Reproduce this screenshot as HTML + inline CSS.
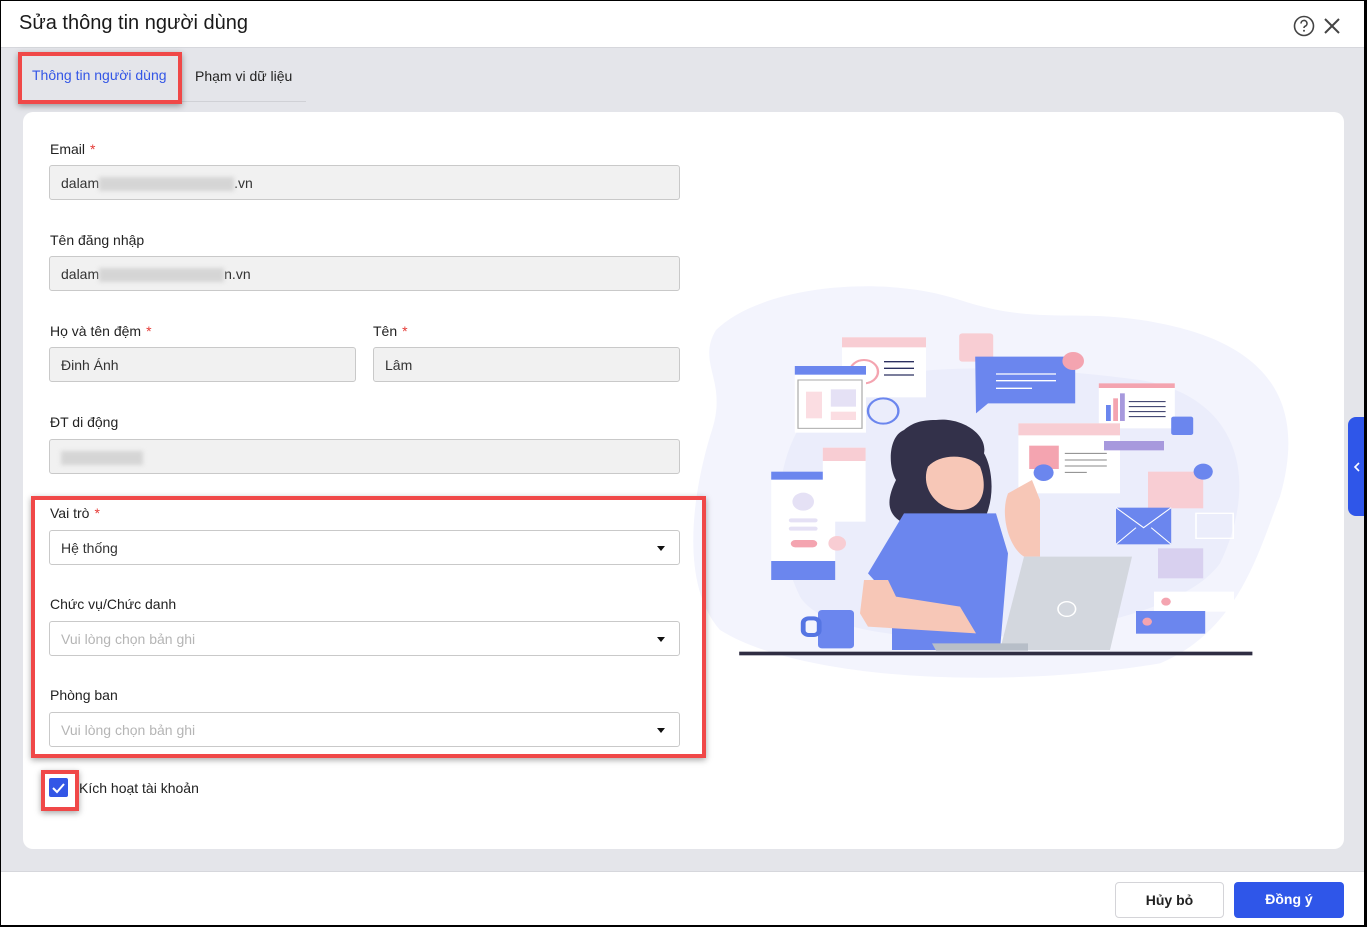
<!DOCTYPE html>
<html><head><meta charset="utf-8"><style>
*{box-sizing:border-box;margin:0;padding:0}
body{width:1367px;height:927px;overflow:hidden;background:#000;font-family:"Liberation Sans",Roboto,sans-serif;position:relative}
.win{position:absolute;left:1px;top:1px;width:1363px;height:924px;background:#e4e5ea;overflow:hidden}
.hdr{position:absolute;left:0;top:0;width:100%;height:47px;background:#fff;border-bottom:1px solid #d6d7dc}
.hdr h1{position:absolute;left:18px;top:11px;font-size:20px;font-weight:500;color:#1a1a1a}
.tab{position:absolute;top:66px;font-size:14px}
.card{position:absolute;left:22px;top:111px;width:1321px;height:737px;background:#fff;border-radius:10px}
.lbl{position:absolute;font-size:14px;color:#222}
.lbl b{color:#e53935;font-weight:normal;margin-left:5px}
.inp{position:absolute;height:35px;border:1px solid #c9c9c9;border-radius:3px;background:#f1f1f1;font-size:14px;color:#333;padding:9px 11px}
.sel{background:#fff}
.sel:after{content:"";position:absolute;right:14px;top:15px;border:4px solid transparent;border-top:5px solid #111;border-bottom:0}
.ph{color:#b5b5b5}
.blur{display:inline-block;height:14px;background:#d5d5d5;vertical-align:middle;filter:blur(2px)}
.red{position:absolute;border:4px solid #f04848;box-shadow:0 2px 6px rgba(0,0,0,.35)}
.ftr{position:absolute;left:0;top:870px;width:100%;height:54px;background:#fff;border-top:1px solid #d6d7dc}
.btn{position:absolute;top:10px;height:36px;border-radius:4px;font-size:14px;font-weight:bold;text-align:center;line-height:34px}
</style></head><body>
<div class="win">
<div class="hdr"><h1>Sửa thông tin người dùng</h1>
<svg style="position:absolute;left:1292px;top:14px" width="22" height="22" viewBox="0 0 22 22"><circle cx="11" cy="11" r="9.5" fill="none" stroke="#444" stroke-width="1.6"/><path d="M8 8.5a3 3 0 1 1 4 2.8c-.8.4-1 .9-1 1.7" fill="none" stroke="#444" stroke-width="1.6"/><circle cx="11" cy="15.8" r="1" fill="#444"/></svg>
<svg style="position:absolute;left:1322px;top:16px" width="18" height="18" viewBox="0 0 18 18"><path d="M2 2L16 16M16 2L2 16" stroke="#444" stroke-width="2"/></svg>
</div>
<div style="position:absolute;left:20px;top:100px;width:285px;height:1px;background:#d0d1d6"></div>
<div class="tab" style="left:31px;color:#3356e6">Thông tin người dùng</div>
<div class="tab" style="left:194px;color:#222;top:67px">Phạm vi dữ liệu</div>
<div class="red" style="left:17px;top:51px;width:164px;height:52px"></div>
<div class="card"></div>

<svg style="position:absolute;left:679px;top:279px" width="620" height="410" viewBox="0 0 1550 1230" preserveAspectRatio="none">
<path d="M90 150C200 20 500 -20 700 60 900 140 1000 80 1200 130 1500 200 1560 400 1500 650 1450 800 1400 1050 1200 1150 800 1230 300 1200 100 1050 -10 900 40 600 80 450 120 300 40 250 90 150Z" fill="#f3f4fd"/>
<path d="M400 320C600 240 900 260 1150 300 1400 350 1450 600 1350 850 1200 1100 400 1150 300 950 200 700 250 420 400 320Z" fill="#ebedfb"/>
<rect x="405" y="172" width="210" height="180" fill="#fff"/><rect x="405" y="172" width="210" height="30" fill="#f8cdd3"/>
<path d="M510 245h75M510 265h75M510 285h75" stroke="#2c3060" stroke-width="4"/>
<circle cx="460" cy="275" r="35" fill="none" stroke="#f4a4b0" stroke-width="6"/>
<circle cx="508" cy="393" r="38" fill="none" stroke="#6b86ee" stroke-width="6"/>
<rect x="287" y="258" width="178" height="200" fill="#fff"/><rect x="287" y="258" width="178" height="26" fill="#6b86ee"/>
<rect x="295" y="300" width="160" height="145" fill="none" stroke="#aaa" stroke-width="3"/>
<rect x="315" y="335" width="40" height="80" fill="#fbdde2"/><rect x="377" y="328" width="63" height="52" fill="#e5e1f5"/><rect x="377" y="395" width="63" height="25" fill="#fbdde2"/>
<rect x="698" y="160" width="85" height="85" rx="8" fill="#f8cdd3"/>
<path d="M738 230h250v140H770l-30 30z" fill="#6b86ee"/>
<path d="M790 282h150M790 302h150M790 325h90" stroke="#fff" stroke-width="4"/>
<circle cx="983" cy="243" r="27" fill="#f4a4b0"/>
<rect x="1047" y="310" width="190" height="135" fill="#fff"/><rect x="1047" y="310" width="190" height="14" fill="#f4a4b0"/>
<rect x="1065" y="375" width="12" height="48" fill="#6b86ee"/><rect x="1083" y="355" width="12" height="68" fill="#f4a4b0"/><rect x="1100" y="340" width="12" height="83" fill="#a799dd"/>
<path d="M1122 365h92M1122 380h92M1122 395h92M1122 410h92" stroke="#2c3060" stroke-width="3"/>
<rect x="1228" y="410" width="55" height="55" rx="6" fill="#6b86ee"/>
<rect x="846" y="430" width="254" height="210" fill="#fff"/><rect x="846" y="430" width="254" height="36" fill="#f8cdd3"/>
<rect x="873" y="497" width="74" height="70" fill="#f4a4b0"/><circle cx="909" cy="578" r="25" fill="#6b86ee"/>
<path d="M962 520h105M962 540h105M962 558h105M962 577h55" stroke="#888" stroke-width="3"/>
<rect x="1060" y="483" width="150" height="28" fill="#a799dd"/>
<rect x="228" y="575" width="160" height="325" fill="#fff"/><rect x="228" y="575" width="160" height="24" fill="#6b86ee"/><rect x="228" y="843" width="160" height="57" fill="#6b86ee"/>
<circle cx="308" cy="665" r="27" fill="#e5e1f5"/><rect x="272" y="715" width="72" height="12" rx="6" fill="#e5e1f5"/><rect x="272" y="740" width="72" height="12" rx="6" fill="#e5e1f5"/><rect x="277" y="780" width="66" height="22" rx="11" fill="#f4a4b0"/><circle cx="393" cy="790" r="22" fill="#f8cdd3"/>
<rect x="357" y="503" width="107" height="222" fill="#fff"/><rect x="357" y="503" width="107" height="40" fill="#f8cdd3"/>
<rect x="1170" y="575" width="138" height="110" fill="#f8cdd3"/><circle cx="1308" cy="575" r="24" fill="#6b86ee"/>
<rect x="1090" y="683" width="138" height="110" fill="#6b86ee"/><path d="M1090 683l69 60 69-60M1090 793l50-50M1228 793l-50-50" stroke="#fff" stroke-width="3" fill="none"/>
<rect x="1195" y="805" width="113" height="90" fill="#d8d0ef"/>
<rect x="1290" y="700" width="93" height="75" fill="none" stroke="#fff" stroke-width="4"/>
<rect x="1185" y="935" width="200" height="60" fill="#fff"/><rect x="1140" y="993" width="173" height="68" fill="#6b86ee"/><circle cx="1215" cy="965" r="12" fill="#f4a4b0"/><circle cx="1168" cy="1025" r="12" fill="#f4a4b0"/>
<path d="M560 450C520 470 520 560 540 600 520 650 510 700 560 730L760 720C790 650 780 560 760 520 770 460 700 410 640 420 600 420 580 430 560 450Z" fill="#33314a"/>
<path d="M620 560C600 620 640 690 700 690 760 690 770 620 750 560 720 520 650 520 620 560Z" fill="#f7c7b7"/>
<path d="M820 640C800 700 820 800 860 830L900 830 900 660 880 600Z" fill="#f7c7b7"/>
<path d="M560 700L790 700 820 820 800 1110 530 1110 530 960 470 880Z" fill="#6b86ee"/>
<path d="M450 1000L460 900 520 900 540 950 700 980 740 1060 470 1040Z" fill="#f7c7b7"/>
<path d="M860 830L1130 830 1075 1110 800 1110Z" fill="#d3d7de"/>
<path d="M630 1090H870V1112H640Z" fill="#b7bec8"/>
<circle cx="967" cy="987" r="22" fill="none" stroke="#fff" stroke-width="4"/>
<rect x="345" y="990" width="90" height="115" rx="10" fill="#6b86ee"/><rect x="308" y="1015" width="40" height="50" rx="14" fill="none" stroke="#5575e3" stroke-width="12"/>
<rect x="148" y="1115" width="1283" height="11" fill="#2f2d42"/>
</svg>

<div class="lbl" style="left:49px;top:140px">Email<b>*</b></div>
<div class="inp" style="left:48px;top:164px;width:631px">dalam<span class="blur" style="width:135px"></span>.vn</div>
<div class="lbl" style="left:49px;top:231px">Tên đăng nhập</div>
<div class="inp" style="left:48px;top:255px;width:631px">dalam<span class="blur" style="width:125px"></span>n.vn</div>
<div class="lbl" style="left:49px;top:322px">Họ và tên đệm<b>*</b></div>
<div class="inp" style="left:48px;top:346px;width:307px">Đinh Ánh</div>
<div class="lbl" style="left:372px;top:322px">Tên<b>*</b></div>
<div class="inp" style="left:372px;top:346px;width:307px">Lâm</div>
<div class="lbl" style="left:49px;top:413px">ĐT di động</div>
<div class="inp" style="left:48px;top:438px;width:631px"><span class="blur" style="width:82px"></span></div>
<div class="lbl" style="left:49px;top:504px">Vai trò<b>*</b></div>
<div class="inp sel" style="left:48px;top:529px;width:631px">Hệ thống</div>
<div class="lbl" style="left:49px;top:595px">Chức vụ/Chức danh</div>
<div class="inp sel ph" style="left:48px;top:620px;width:631px">Vui lòng chọn bản ghi</div>
<div class="lbl" style="left:49px;top:686px">Phòng ban</div>
<div class="inp sel ph" style="left:48px;top:711px;width:631px">Vui lòng chọn bản ghi</div>
<div class="red" style="left:30px;top:495px;width:675px;height:262px"></div>
<div style="position:absolute;left:48px;top:777px;width:19px;height:19px;background:#3356e6;border-radius:2px"><svg width="19" height="19"><path d="M4 10l4 4 7-8" fill="none" stroke="#fff" stroke-width="2"/></svg></div>
<div class="red" style="left:40px;top:769px;width:38px;height:41px"></div>
<div class="lbl" style="left:78px;top:779px">Kích hoạt tài khoản</div>

<div style="position:absolute;left:1347px;top:416px;width:20px;height:99px;background:#2f56e9;border-radius:8px 0 0 8px"><svg width="16" height="99"><path d="M11 46l-4 4 4 4" fill="none" stroke="#fff" stroke-width="1.6"/></svg></div>
<div class="ftr">
<div class="btn" style="left:1114px;width:109px;border:1px solid #d4d4d8;color:#222;background:#fff">Hủy bỏ</div>
<div class="btn" style="left:1233px;width:110px;background:#2f56e9;color:#fff">Đồng ý</div>
</div>
</div>
</body></html>
